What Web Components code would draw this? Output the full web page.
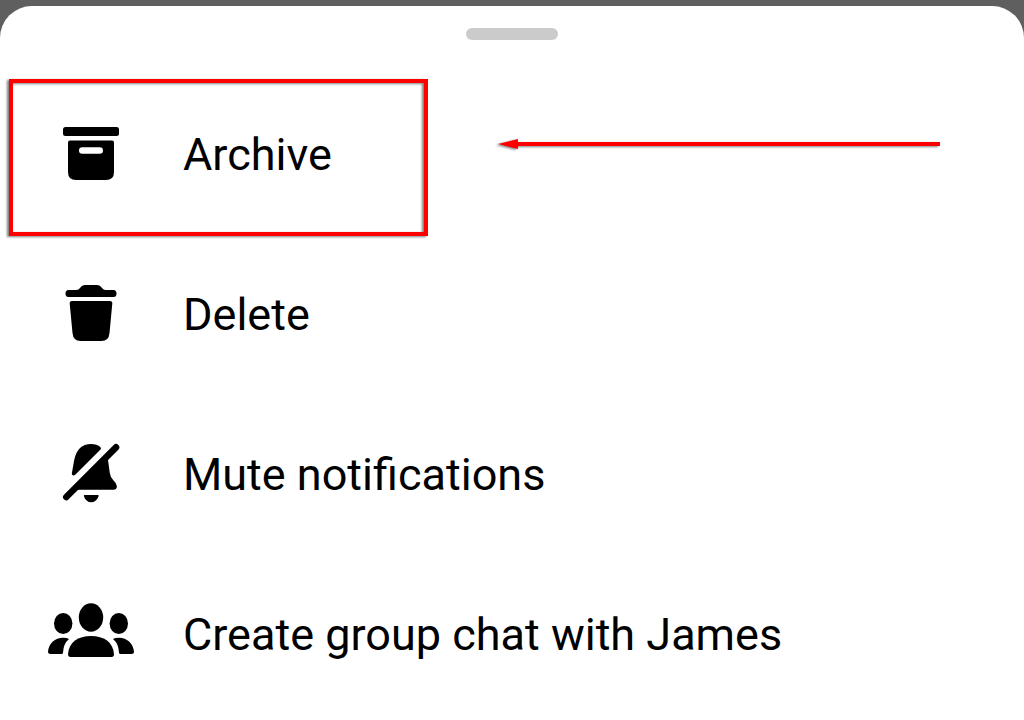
<!DOCTYPE html>
<html lang="en">
<head>
<meta charset="utf-8">
<meta name="viewport" content="width=device-width, initial-scale=1">
<title>Chat options</title>
<style>
  body {
    margin: 0;
    background: #5f5f5f;
    font-family: Roboto, "Liberation Sans", sans-serif;
    color: #000;
  }
</style>
</head>
<body>
<bottom-sheet>
  <sheet-item icon="archive" marked>Archive</sheet-item>
  <sheet-item icon="delete">Delete</sheet-item>
  <sheet-item icon="mute">Mute notifications</sheet-item>
  <sheet-item icon="group">Create group chat with James</sheet-item>
</bottom-sheet>

<script>
// All icons share a 96x96 grid
const icons = {
  archive: `
    <rect x="20" y="20" width="56" height="9" rx="2.5"/>
    <path fill-rule="evenodd" d="M27 33.5H69Q71 33.5 71 35.5V65Q71 73 63 73H33Q25 73 25 65V35.5Q25 33.5 27 33.5ZM39.3 40.2a3.3 3.3 0 0 0 0 6.6H56.7a3.3 3.3 0 0 0 0-6.6Z"/>`,
  delete: `
    <path d="M25.5 23H33.5Q35.5 23 37 21L38 19.8Q39.5 18 42 18H54Q56.5 18 58 19.8L59 21Q60.5 23 62.5 23H70.5Q73.5 23 73.5 26.5T70.5 30H25.5Q22.5 30 22.5 26.5T25.5 23Z"/>
    <path d="M29 34H67Q69.5 34 69.3 36.5L66.5 66Q65.8 74 58.5 74H37.5Q30.2 74 29.5 66L26.7 36.5Q26.5 34 29 34Z"/>`,
  mute: `
    <path d="M23.3 70L73 20.3" fill="none" stroke="#000" stroke-width="6.6" stroke-linecap="round"/>
    <path d="M28.9 46L31.2 33Q34.5 17 48 17Q54 17 57.5 20.3Q58.6 21.5 57.5 22.6L32.5 47.6Q30.6 49.2 29.3 48.1Q28.7 47.4 28.9 46Z"/>
    <path d="M31 62.7L63 30.5L65 33L66.8 46Q67.4 50.5 70.5 53.5Q73.9 56.5 73.9 59.3Q73.9 62.7 70.5 62.7Z"/>
    <path d="M41.5 68H55Q56.2 68 55.5 69.5Q53.2 75.3 48.2 75.3T41 69.5Q40.4 68 41.5 68Z"/>`,
  group: `
    <ellipse cx="48" cy="30.5" rx="12.2" ry="14.2"/>
    <ellipse cx="20.2" cy="36.5" rx="9.2" ry="10.5"/>
    <ellipse cx="75.8" cy="36.5" rx="9.2" ry="10.5"/>
    <path d="M25 67C26 55 35 49 48 49S70 55 71 67Q71 70 68.5 70H27.5Q25 70 25 67Z"/>
    <path d="M5 64.5C6 56 12 50.7 20 50.7Q24 50.7 26 52Q20.5 56.5 20 65.5Q20 67 18.5 67H7.5Q5 67 5 64.5Z"/>
    <path d="M91 64.5C90 56 84 50.7 76 50.7Q72 50.7 70 52Q75.5 56.5 76 65.5Q76 67 77.5 67H88.5Q91 67 91 64.5Z"/>`
};

class BottomSheet extends HTMLElement {
  constructor() {
    super();
    this.attachShadow({ mode: "open" });
    this.shadowRoot.innerHTML = `
      <style>
        :host {
          display: flow-root;
          overflow: hidden;
          background: #5f5f5f;
        }
        .sheet {
          box-sizing: border-box;
          min-height: calc(100vh - 6px);
          margin-top: 6px;
          padding-top: 22px;
          background: #fff;
          border-radius: 32px 32px 0 0;
        }
        .handle {
          width: 92px;
          height: 12px;
          margin: 0 auto 35px;
          border-radius: 6px;
          background: #cbcbcb;
        }
        .items {
          display: flex;
          flex-direction: column;
        }
      </style>
      <div class="sheet">
        <div class="handle"></div>
        <div class="items"><slot></slot></div>
      </div>
    `;
  }
}

class SheetItem extends HTMLElement {
  constructor() {
    super();
    this.attachShadow({ mode: "open" });
    this.render();
  }

  render() {
    this.shadowRoot.innerHTML = `
      <style>
        :host {
          display: block;
          position: relative;
        }
        button {
          display: flex;
          align-items: center;
          gap: 44px;
          box-sizing: border-box;
          width: 100%;
          min-height: 160px;
          padding: 0 43px;
          border: 0;
          background: none;
          color: inherit;
          font-family: inherit;
          font-size: 45px;
          line-height: 56px;
          text-align: left;
          cursor: pointer;
        }
        .icon {
          flex: none;
          width: 96px;
          height: 96px;
        }
      </style>
      <button type="button">
        <svg class="icon" viewBox="0 0 96 96" aria-hidden="true">${icons[this.icon]}</svg>
        <span><slot></slot></span>
      </button>
      ${this.hasAttribute("marked") ? "<callout-mark></callout-mark>" : ""}
    `;
  }

  get icon() {
    return this.getAttribute("icon");
  }
}

// Red frame and arrow laid over the item
class CalloutMark extends HTMLElement {
  constructor() {
    super();
    this.attachShadow({ mode: "open" });
    this.shadowRoot.innerHTML = `
      <style>
        :host {
          position: absolute;
          inset: 0;
          pointer-events: none;
        }
        .frame {
          position: absolute;
          box-sizing: border-box;
          top: 4px;
          left: 9px;
          width: 419px;
          height: 157px;
          border: 4px solid #f00;
          filter: drop-shadow(-2px 1px 1px rgba(0, 0, 0, 0.5));
        }
        .arrow {
          position: absolute;
          top: 59px;
          left: 497px;
          width: 443px;
          height: 20px;
          overflow: visible;
          filter: drop-shadow(-2px 1px 1px rgba(0, 0, 0, 0.5));
        }
      </style>
      <div class="frame"></div>
      <svg class="arrow" viewBox="0 0 443 20" aria-hidden="true">
        <path d="M1 10L21 5V8H443V12H21V15Z" fill="#f00"/>
      </svg>
    `;
  }
}

customElements.define("bottom-sheet", BottomSheet);
customElements.define("sheet-item", SheetItem);
customElements.define("callout-mark", CalloutMark);
</script>
</body>
</html>
